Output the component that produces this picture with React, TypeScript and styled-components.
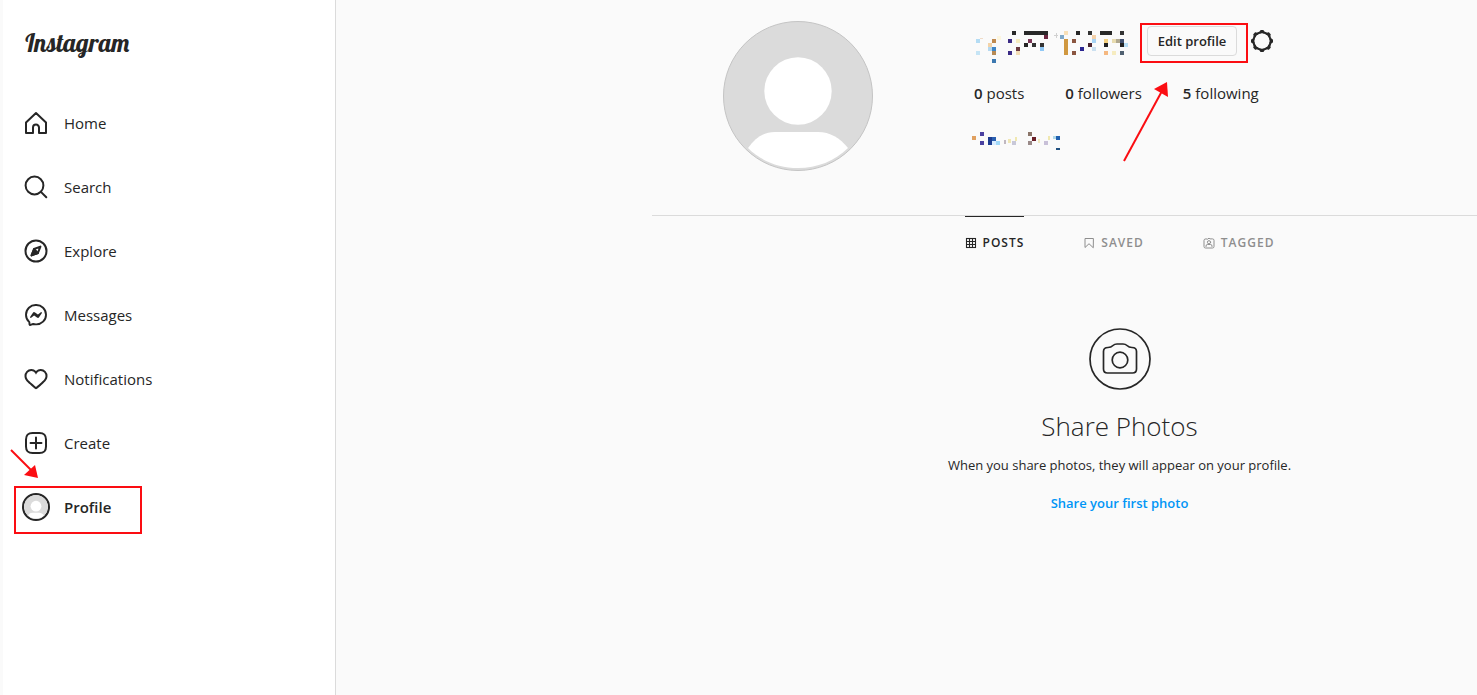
import React from 'react';
import styled, { createGlobalStyle } from 'styled-components';

const ink = '#262626';
const muted = '#8e8e8e';
const line = '#dbdbdb';
const red = '#fb0d12';

const GlobalStyle = createGlobalStyle`
  *, *::before, *::after { box-sizing: border-box; }
  body {
    margin: 0;
    background: #fafafa;
    color: ${ink};
    font-family: "Segoe UI", "Open Sans", "Noto Sans", sans-serif;
    font-size: 15px;
    line-height: 20px;
  }
  a { color: inherit; text-decoration: none; }
  button { font: inherit; color: inherit; cursor: pointer; }
  svg { display: block; }
`;

const Page = styled.div`
  display: flex;
  min-height: 100vh;
  overflow: hidden;
`;

const Sidebar = styled.aside`
  flex: 0 0 336px;
  background: #fff;
  border-left: 3px solid #fafafa;
  border-right: 1px solid ${line};
  padding: 24px 12px 0 9px;
`;

const Wordmark = styled.a`
  display: block;
  height: 40px;
  padding: 0 12px;
  margin-bottom: 35px;
  font-family: "Lobster Two", "Liberation Serif", cursive;
  font-style: italic;
  font-weight: 700;
  font-size: 25px;
  line-height: 38px;
`;

const NavList = styled.ul`
  list-style: none;
  margin: 0;
  padding: 0;
  display: flex;
  flex-direction: column;
  gap: 16px;
`;

const NavItem = styled.li`
  position: relative;
`;

const NavLink = styled.a<{ $active?: boolean }>`
  display: flex;
  align-items: center;
  gap: 16px;
  height: 48px;
  padding: 0 12px;
  font-weight: ${(p) => (p.$active ? 600 : 400)};
`;

const SmallAvatar = styled.span`
  flex: none;
  margin: 0 -2px;
  width: 28px;
  height: 28px;
  border: 2px solid ${ink};
  border-radius: 50%;
  overflow: hidden;
`;

const Highlight = styled.span`
  position: absolute;
  border: 2px solid ${red};
  pointer-events: none;
`;

const ProfileHighlight = styled(Highlight)`
  inset: 3px auto auto 2px;
  width: 128px;
  height: 48px;
`;

const EditHighlight = styled(Highlight)`
  inset: -3px -11px -7px -7px;
`;

const ProfileArrow = styled.svg`
  position: absolute;
  left: -4px;
  top: -36px;
  pointer-events: none;
`;

const EditArrow = styled.svg`
  position: absolute;
  left: -28px;
  top: 54px;
  pointer-events: none;
`;

const Main = styled.main`
  flex: 1;
  min-width: 0;
  padding: 21px 0 0 316px;
`;

const Profile = styled.div`
  width: 935px;
`;

const Header = styled.header`
  display: flex;
  padding-left: 71px;
  height: 194px;
`;

const Portrait = styled.div`
  flex: none;
  width: 150px;
  height: 150px;
  margin-right: 101px;
`;

const Details = styled.section`
  display: flex;
  flex-direction: column;
`;

const NameRow = styled.div`
  display: flex;
  align-items: center;
  height: 40px;
`;

const UserName = styled.div`
  align-self: flex-start;
  padding-top: 7px;
`;

const FullName = styled.div`
  margin-left: -4px;
`;

const EditWrap = styled.div`
  position: relative;
  margin: 0 13px 0 17px;
`;

const EditButton = styled.button`
  display: block;
  width: 90px;
  height: 30px;
  padding: 0;
  border: 1px solid ${line};
  border-radius: 4px;
  background: transparent;
  font-size: 13px;
  line-height: 20px;
  font-weight: 600;
`;

const IconButton = styled.button`
  padding: 0;
  border: 0;
  background: none;
`;

const Stats = styled.ul`
  display: flex;
  gap: 41px;
  list-style: none;
  margin: 22px 0 28px;
  padding: 0;
  b { font-weight: 600; }
`;

const Tabs = styled.nav`
  display: flex;
  justify-content: center;
  gap: 59px;
  border-top: 1px solid ${line};
`;

const Tab = styled.a<{ $active?: boolean }>`
  display: flex;
  align-items: center;
  gap: 6px;
  height: 53px;
  border-top: 1px solid ${(p) => (p.$active ? ink : 'transparent')};
  color: ${(p) => (p.$active ? ink : muted)};
  font-size: 12px;
  font-weight: 600;
  letter-spacing: 1px;
`;

const Empty = styled.section`
  display: flex;
  flex-direction: column;
  align-items: center;
  padding-top: 59px;
`;

const EmptyTitle = styled.h1`
  margin: 20px 0 13px;
  font-size: 26px;
  line-height: 32px;
  font-weight: 300;
`;

const EmptyText = styled.p`
  margin: 0 0 18px;
  font-size: 13px;
`;

const ShareLink = styled.a`
  color: #0095f6;
  font-size: 13px;
  font-weight: 600;
`;

const Icon = ({ children, size = 24 }: { children: React.ReactNode; size?: number }) => (
  <svg width={size} height={size} viewBox="0 0 24 24" fill="none" stroke="currentColor"
    strokeWidth="2" strokeLinecap="round" strokeLinejoin="round" aria-hidden="true">
    {children}
  </svg>
);

const icons = {
  home: (
    <path d="M9.005 16.545a2.997 2.997 0 0 1 2.997-2.997A2.997 2.997 0 0 1 15 16.545V22h7V11.543L12 2 2 11.543V22h7.005Z" />
  ),
  search: (
    <>
      <circle cx="10.5" cy="10.5" r="8.9" />
      <path d="M16.9 16.9 22.3 22.3" />
    </>
  ),
  explore: (
    <>
      <path d="M13.941 13.953 7.581 16.424 10.06 10.056 16.42 7.585Z" />
      <path d="M10.06 10.056 13.949 13.945 7.581 16.424Z" fill="currentColor" />
      <circle cx="12" cy="12" r="10.5" />
    </>
  ),
  messages: (
    <>
      <path strokeWidth="1.9" d="M12.003 2.001a9.705 9.705 0 1 1 0 19.4 10.876 10.876 0 0 1-2.895-.384.798.798 0 0 0-.533.04l-1.984.876a.801.801 0 0 1-1.123-.708l-.054-1.78a.806.806 0 0 0-.27-.569 9.49 9.49 0 0 1-3.14-7.175 9.65 9.65 0 0 1 10-9.7Z" />
      <path stroke="none" fill="currentColor" d="M17.79 10.132a.659.659 0 0 0-.962-.873l-2.556 2.05a.63.63 0 0 1-.758.002L11.06 9.47a1.576 1.576 0 0 0-2.277.42l-2.567 3.98a.659.659 0 0 0 .961.875l2.556-2.049a.63.63 0 0 1 .759-.002l2.452 1.84a1.576 1.576 0 0 0 2.278-.42Z" />
    </>
  ),
  heart: (
    <path stroke="none" fill="currentColor" d="M16.792 3.904A4.989 4.989 0 0 1 21.5 9.122c0 3.072-2.652 4.959-5.197 7.222-2.512 2.243-3.865 3.469-4.303 3.752-.477-.309-2.143-1.823-4.303-3.752C5.141 14.072 2.5 12.167 2.5 9.122a4.989 4.989 0 0 1 4.708-5.218 4.21 4.21 0 0 1 3.675 1.941c.84 1.175.98 1.763 1.12 1.763s.278-.588 1.11-1.766a4.17 4.17 0 0 1 3.679-1.938m0-2a6.04 6.04 0 0 0-4.797 2.127 6.052 6.052 0 0 0-4.787-2.127A6.985 6.985 0 0 0 .5 9.122c0 3.61 2.55 5.827 5.015 7.97.283.246.569.494.853.747l1.027.918a44.998 44.998 0 0 0 3.518 3.018 2 2 0 0 0 2.174 0 45.263 45.263 0 0 0 3.626-3.115l.922-.824c.293-.26.59-.519.885-.774 2.334-2.025 4.98-4.32 4.98-7.94a6.985 6.985 0 0 0-6.708-7.218Z" />
  ),
  create: (
    <>
      <path d="M2 12v3.45c0 2.849.698 4.005 1.606 4.944.94.909 2.098 1.608 4.946 1.608h6.896c2.848 0 4.006-.7 4.946-1.608C21.302 19.455 22 18.3 22 15.45V8.552c0-2.849-.698-4.006-1.606-4.945C19.454 2.7 18.296 2 15.448 2H8.552c-2.848 0-4.006.699-4.946 1.607C2.698 4.547 2 5.703 2 8.552Z" />
      <path d="M6.545 12H17.455M12 6.545V17.455" />
    </>
  ),
  gear: (
    <>
      <circle cx="12" cy="12" r="8.635" />
      <path d="M14.232 3.656a1.269 1.269 0 0 1-.796-.66L12.93 2h-1.86l-.505.996a1.269 1.269 0 0 1-.796.66m-.001 16.688a1.269 1.269 0 0 1 .796.66l.505.996h1.862l.505-.996a1.269 1.269 0 0 1 .796-.66M3.656 9.768a1.269 1.269 0 0 1-.66.796L2 11.07v1.862l.996.505a1.269 1.269 0 0 1 .66.796m16.687-.001a1.269 1.269 0 0 1 .66-.796L22 12.93v-1.86l-.996-.505a1.269 1.269 0 0 1-.66-.796M7.678 4.522a1.269 1.269 0 0 1-1.03.096l-1.06-.348L4.27 5.587l.348 1.062a1.269 1.269 0 0 1-.096 1.03m11.8 11.799a1.269 1.269 0 0 1 1.03-.096l1.06.348 1.318-1.317-.348-1.062a1.269 1.269 0 0 1 .096-1.03m-14.956.001a1.269 1.269 0 0 1 .096 1.03l-.348 1.06 1.317 1.318 1.062-.348a1.269 1.269 0 0 1 1.03.096m11.799-11.8a1.269 1.269 0 0 1-.096-1.03l.348-1.06-1.317-1.318-1.062.348a1.269 1.269 0 0 1-1.03-.096" />
    </>
  ),
  grid: (
    <g strokeWidth="2.2" strokeLinejoin="miter">
      <rect x="3" y="3" width="18" height="18" />
      <path d="M9 3V21M15 3V21M3 9H21M3 15H21" />
    </g>
  ),
  saved: <path strokeLinejoin="miter" d="M20 21 12 13.44 4 21V3H20Z" />,
  tagged: (
    <>
      <path d="M10.2 3.8 12 2l1.8 1.8H19a3 3 0 0 1 3 3V19a3 3 0 0 1-3 3H5a3 3 0 0 1-3-3V6.8a3 3 0 0 1 3-3Z" />
      <circle cx="12" cy="10.5" r="3.2" />
      <path d="M6 19v-1a3 3 0 0 1 3-3h6a3 3 0 0 1 3 3v1" />
    </>
  ),
};

const AvatarArt = () => (
  <svg width="100%" height="100%" viewBox="0 0 150 150" aria-hidden="true">
    <circle cx="75" cy="75" r="74.5" fill="#dbdbdb" stroke="#c4c4c4" />
    <circle cx="75" cy="70" r="33.7" fill="#fff" />
    <path d="M25 127C33 116 41 111 52 111H95C107 111 117 117 125 127C112 140 94 147 75 147S38 140 25 127Z" fill="#fff" />
  </svg>
);

type Block = [number, number, number, number, string];

const nameBlocks: Block[] = [
  [2, 11, 4, 4, '#b4dcf4'], [2, 23, 4, 4, '#c5e4f5'], [6, 10, 3, 1, '#f0dcc8'],
  [18, 11, 4, 4, '#c08a50'], [23, 8, 4, 4, '#fdf6df'], [14, 15, 4, 4, '#f3d3a8'],
  [14, 19, 4, 4, '#b5d8f0'], [18, 19, 4, 4, '#3f86c8'], [18, 23, 4, 4, '#b78a55'],
  [18, 31, 4, 4, '#3c78b0'], [38, 3, 4, 4, '#282828'], [34, 11, 4, 4, '#3a2a85'],
  [42, 11, 4, 4, '#f6ecc0'], [42, 19, 4, 4, '#6b3a40'], [34, 23, 4, 4, '#3a2a85'],
  [42, 23, 4, 4, '#f3deb8'], [50, 3, 24, 4, '#282828'], [70, 7, 4, 4, '#6b2540'],
  [54, 11, 4, 4, '#7a3555'], [50, 15, 4, 4, '#262626'], [58, 15, 4, 4, '#333333'],
  [66, 15, 4, 4, '#333333'], [66, 19, 4, 4, '#90c8f5'], [80, 7, 4, 1, '#d0d0d0'],
  [82, 5, 1, 5, '#d0d0d0'], [86, 7, 4, 4, '#7fa8c8'], [90, 3, 4, 4, '#f8e0b8'],
  [90, 11, 4, 16, '#d09840'], [98, 11, 4, 4, '#8a5540'], [98, 23, 4, 4, '#8a5540'],
  [102, 3, 4, 4, '#282828'], [114, 3, 4, 4, '#333333'], [118, 7, 4, 4, '#f3d0a8'],
  [118, 11, 4, 4, '#a8d4f5'], [114, 15, 4, 4, '#4a2530'], [118, 19, 4, 4, '#cbe0f0'],
  [106, 19, 4, 4, '#2a2590'], [126, 3, 12, 4, '#282828'], [130, 11, 4, 4, '#f3d080'],
  [130, 15, 4, 4, '#222222'], [130, 23, 4, 4, '#f5b880'], [138, 11, 4, 4, '#e8dcb0'],
  [142, 11, 4, 4, '#b0a890'], [138, 23, 4, 4, '#f6ecc0'], [146, 3, 4, 4, '#333333'],
  [146, 11, 4, 4, '#405070'], [146, 15, 4, 4, '#222222'], [146, 23, 4, 4, '#506070'],
  [150, 15, 4, 4, '#b8def5'],
];

const fullNameBlocks: Block[] = [
  [2, 5, 4, 4, '#e0a060'], [10, 1, 4, 4, '#4a40a0'], [10, 10, 4, 4, '#4a40a0'],
  [18, 6, 4, 8, '#1c3c90'], [22, 6, 4, 4, '#2a60b0'], [22, 10, 4, 4, '#d8ecff'],
  [26, 10, 4, 4, '#a0d8f8'], [34, 9, 2, 4, '#c0b8c0'], [38, 8, 3, 4, '#f0e6b4'],
  [42, 10, 4, 4, '#c8c8d8'], [45, 6, 2, 4, '#f0e8b0'], [58, 1, 4, 4, '#8a7468'],
  [58, 10, 4, 4, '#9a8a88'], [62, 6, 4, 4, '#6a2028'], [68, 8, 2, 4, '#f0e8c0'],
  [74, 10, 4, 4, '#c8c0d8'], [78, 5, 2, 4, '#f0e8b0'], [83, 5, 3, 3, '#b0d8e8'],
  [86, 5, 4, 4, '#2060b0'], [86, 17, 4, 2, '#205080'],
];

const Mosaic = ({ blocks, width, height }: { blocks: Block[]; width: number; height: number }) => (
  <svg width={width} height={height} shapeRendering="crispEdges" aria-hidden="true">
    {blocks.map(([x, y, w, h, fill], i) => (
      <rect key={i} x={x} y={y} width={w} height={h} fill={fill} />
    ))}
  </svg>
);

const navItems = [
  { label: 'Home', icon: icons.home },
  { label: 'Search', icon: icons.search },
  { label: 'Explore', icon: icons.explore },
  { label: 'Messages', icon: icons.messages },
  { label: 'Notifications', icon: icons.heart },
  { label: 'Create', icon: icons.create },
];

const stats = [
  { count: 0, label: 'posts' },
  { count: 0, label: 'followers' },
  { count: 5, label: 'following' },
];

export default function App() {
  return (
    <Page>
      <GlobalStyle />
      <Sidebar>
        <Wordmark href="#">Instagram</Wordmark>
        <nav>
          <NavList>
            {navItems.map(({ label, icon }) => (
              <NavItem key={label}>
                <NavLink href="#"><Icon>{icon}</Icon>{label}</NavLink>
              </NavItem>
            ))}
            <NavItem>
              <NavLink href="#" $active aria-current="page">
                <SmallAvatar><AvatarArt /></SmallAvatar>Profile
              </NavLink>
              <ProfileHighlight />
              <ProfileArrow width="34" height="34" aria-hidden="true">
                <path d="M3 3 24 24" stroke={red} strokeWidth="2" />
                <path d="M30 31 16 28 27 18Z" fill={red} />
              </ProfileArrow>
            </NavItem>
          </NavList>
        </nav>
      </Sidebar>
      <Main>
        <Profile>
          <Header>
            <Portrait><AvatarArt /></Portrait>
            <Details>
              <NameRow>
                <UserName><Mosaic blocks={nameBlocks} width={156} height={36} /></UserName>
                <EditWrap>
                  <EditButton type="button">Edit profile</EditButton>
                  <EditHighlight />
                  <EditArrow width="56" height="84" aria-hidden="true">
                    <path d="M5 81 43 11" stroke={red} strokeWidth="2" />
                    <path d="M48 2 49 17 35 9Z" fill={red} />
                  </EditArrow>
                </EditWrap>
                <IconButton type="button" aria-label="Options"><Icon>{icons.gear}</Icon></IconButton>
              </NameRow>
              <Stats>
                {stats.map(({ count, label }) => (
                  <li key={label}><b>{count}</b> {label}</li>
                ))}
              </Stats>
              <FullName><Mosaic blocks={fullNameBlocks} width={96} height={20} /></FullName>
            </Details>
          </Header>
          <Tabs>
            <Tab href="#" $active><Icon size={12}>{icons.grid}</Icon>POSTS</Tab>
            <Tab href="#"><Icon size={12}>{icons.saved}</Icon>SAVED</Tab>
            <Tab href="#"><Icon size={12}>{icons.tagged}</Icon>TAGGED</Tab>
          </Tabs>
          <Empty>
            <svg width="62" height="62" viewBox="0 0 62 62" fill="none" stroke={ink} strokeWidth="1.7" aria-hidden="true">
              <circle cx="31" cy="31" r="30" />
              <circle cx="31" cy="32" r="7.8" />
              <path strokeLinejoin="round" d="M19 19.5C22 19.5 23 18.5 24 17.5C25 16.5 26 16 28 16H34C36 16 37 16.5 38 17.5C39 18.5 40 19.5 43 19.5C46 19.5 47.5 21 47.5 23.5V41C47.5 43.5 46 45 43.5 45H18.5C16 45 14.5 43.5 14.5 41V23.5C14.5 21 16 19.5 19 19.5Z" />
            </svg>
            <EmptyTitle>Share Photos</EmptyTitle>
            <EmptyText>When you share photos, they will appear on your profile.</EmptyText>
            <ShareLink href="#">Share your first photo</ShareLink>
          </Empty>
        </Profile>
      </Main>
    </Page>
  );
}
